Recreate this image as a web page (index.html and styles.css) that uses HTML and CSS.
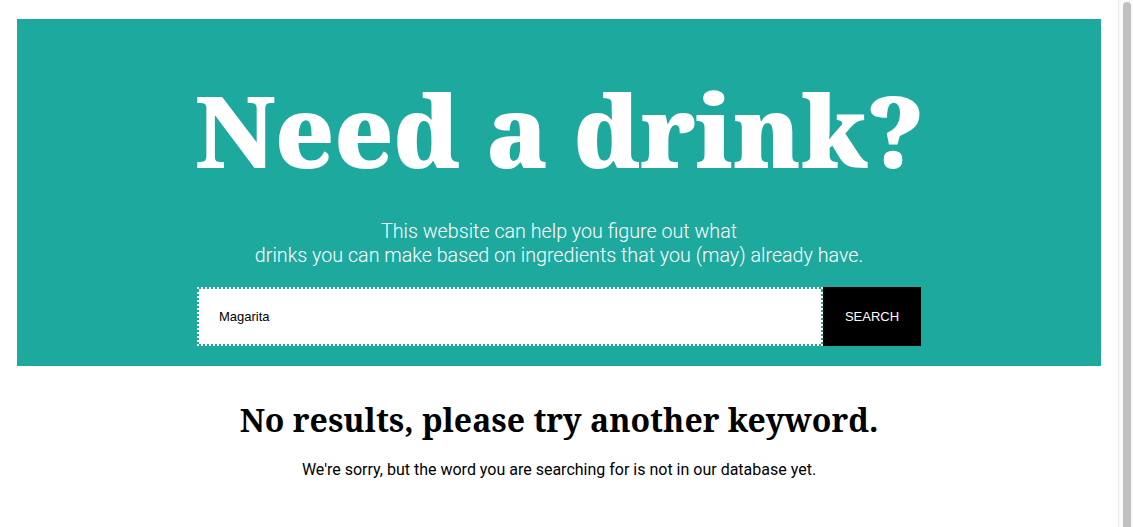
FILE: index.html
```html
<!DOCTYPE html>
<html lang="en">
<head>
<meta charset="utf-8">
<title>Need a drink?</title>
<link rel="stylesheet" href="styles.css">
</head>
<body>
<div class="page">
  <main class="content">
    <header class="hero">
      <h1 class="hero-title">Need a drink?</h1>
      <p class="hero-text">This website can help you figure out what<br>drinks you can make based on ingredients that you (may) already have.</p>
      <form class="search">
        <input class="search-input" type="text" value="Magarita">
        <button class="search-button" type="button">SEARCH</button>
      </form>
    </header>
    <section class="results">
      <h2 class="results-title">No results, please try another keyword.</h2>
      <p class="results-text">We're sorry, but the word you are searching for is not in our database yet.</p>
    </section>
  </main>
  <div class="scrollbar"><div class="scrollbar-thumb"></div></div>
</div>
</body>
</html>
```
FILE: styles.css
```css
html, body {
  margin: 0;
  height: 100%;
  overflow: hidden;
  background: #fff;
}
.page {
  display: flex;
  height: 100%;
}
.content {
  flex: 1;
  padding: 19px 17px 0;
  min-width: 0;
}
.hero {
  background: #1ea99f;
  height: 347px;
  box-sizing: border-box;
  padding-top: 1px;
  display: flex;
  flex-direction: column;
  align-items: center;
}
.hero-title {
  margin: 56px 0 0;
  font-family: "Noto Serif", "DejaVu Serif", serif;
  font-weight: 900;
  font-size: 99px;
  line-height: 108px;
  color: #fff;
}
.hero-text {
  margin: 36px 0 0;
  font-family: Roboto, "Noto Sans", sans-serif;
  font-weight: 300;
  font-size: 19.7px;
  line-height: 24px;
  text-align: center;
  color: #fff;
}
.search {
  display: flex;
  margin-top: 19px;
}
.search-input {
  width: 626px;
  height: 59px;
  box-sizing: border-box;
  border: 2px dotted #fff;
  background: #fff;
  background-clip: padding-box;
  padding: 0 20px;
  font-family: "Liberation Sans", Arial, sans-serif;
  font-size: 13px;
  color: #000;
  outline: none;
}
.search-button {
  width: 98px;
  height: 59px;
  border: 0;
  background: #000;
  color: #fff;
  font-family: "Liberation Sans", Arial, sans-serif;
  font-size: 13px;
  padding: 0;
}
.results {
  text-align: center;
}
.results-title {
  margin: 34px 0 0;
  font-family: "Noto Serif", "DejaVu Serif", serif;
  font-weight: 700;
  font-size: 32px;
  line-height: 40px;
  color: #000;
}
.results-text {
  margin: 20px 0 0;
  font-family: Roboto, "Noto Sans", sans-serif;
  font-size: 16px;
  line-height: 20px;
  color: #000;
}
.scrollbar {
  width: 14px;
  flex: none;
  background: #fafafa;
  border-left: 1px solid #e8e8e8;
  display: flex;
  justify-content: center;
  padding-top: 2px;
}
.scrollbar-thumb {
  width: 8px;
  margin-left: 1px;
  height: 600px;
  background: #c1c1c1;
  border-radius: 4px;
}
```
